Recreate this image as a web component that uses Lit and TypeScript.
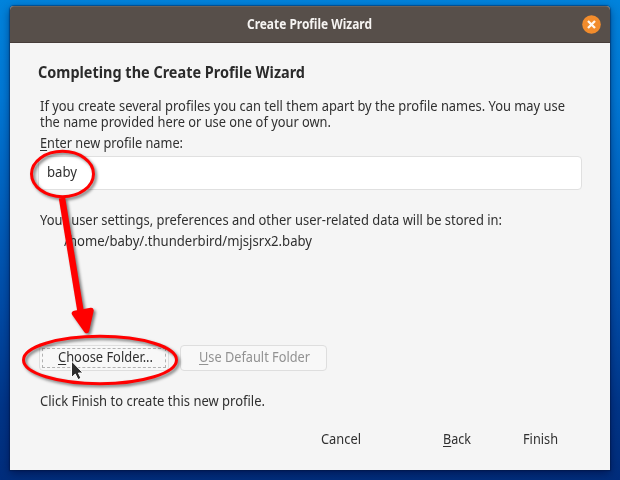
import { LitElement, html, css, svg } from "lit";
import { customElement, property } from "lit/decorators.js";

/** A single line of text condensed to a given width, with an optional access key. */
@customElement("text-line")
class TextLine extends LitElement {
  @property() text = "";
  @property({ type: Number }) width = 0;
  @property({ type: Boolean }) accesskeyed = false;
  static styles = css`
    :host { display: block; white-space: nowrap; line-height: 16px; height: 16px; }
    .run { display: block; width: max-content; transform-origin: 0 50%; }
    .key { text-decoration: underline; text-decoration-thickness: 1px; text-underline-offset: 2px; }
  `;
  firstUpdated() {
    const run = this.renderRoot.querySelector(".run") as HTMLElement;
    const natural = run.getBoundingClientRect().width;
    if (natural) run.style.transform = `scaleX(${this.width / natural})`;
    this.style.width = `${this.width}px`;
  }
  render() {
    return this.accesskeyed
      ? html`<span class="run"><span class="key">${this.text[0]}</span>${this.text.slice(1)}</span>`
      : html`<span class="run">${this.text}</span>`;
  }
}

@customElement("app-root")
class AppRoot extends LitElement {
  static styles = css`
    :host {
      display: block; position: relative; box-sizing: border-box;
      width: 620px; height: 480px; padding: 6px 10px 10px; overflow: hidden;
      background: linear-gradient(180deg, #0083dc 0%, #0078d6 20%, #0060bd 43%, #004aa5 65%, #003588 85%, #002d7c 100%);
      font-family: "Noto Sans", "Open Sans", sans-serif;
      font-size: 14px; font-stretch: 87.5%; color: #303030;
    }
    .dialog {
      display: flex; flex-direction: column; height: 464px; background: #f5f5f5;
      border-radius: 4px 4px 0 0; box-shadow: 0 0 1px 1px rgba(0,20,60,.4), 0 3px 10px rgba(0,0,40,.5);
    }
    .titlebar {
      display: grid; grid-template-columns: 1fr auto 1fr; align-items: center;
      height: 37px; flex: none; box-sizing: border-box; padding: 0 9px 1px 0;
      background: #574f4a; border-top: 1px solid #6a605a; border-bottom: 1px solid #463c39;
      border-radius: 4px 4px 0 0; color: #f6f4f2; font-weight: 700;
    }
    .titlebar text-line { grid-column: 2; margin-left: 8px; }
    .close { justify-self: end; display: block; }
    .body { display: flex; flex-direction: column; padding: 19px 28px 0 30px; }
    .heading { font-size: 16px; font-weight: 700; color: #2b2b2b; margin: 2px 0 18px -2px; }
    .label { margin-top: 5px; }
    .field {
      box-sizing: border-box; height: 34px; margin: 5px 0 22px -2px; padding: 7px 8px;
      background: #fff; border: 1px solid #e0e0e0; border-radius: 4px;
    }
    .path { margin: 5px 0 96px 24px; }
    .buttons { display: flex; gap: 11px; margin-left: -1px; }
    .button {
      display: flex; justify-content: center; box-sizing: border-box; width: 130px; height: 26px;
      padding: 3px; border: 1px solid #dedede; border-radius: 4px; background: #f8f8f8;
    }
    .focus { flex: 1; display: flex; justify-content: center; margin: -1px -1px; padding-left: 2px; border: 1px dashed #b2b2b2; }
    .button.disabled { width: 147px; color: #929292; padding-left: 5px; }
    .note { margin-top: 22px; }
    .actions { display: flex; margin: 22px 0 0 281px; }
    .back { margin-left: 82px; }
    .finish { margin-left: 52px; }
    .marks { position: absolute; left: 0; top: 0; pointer-events: none; }
    .red { filter: drop-shadow(2px 2px 1.5px rgba(0,0,0,.5)); }
  `;
  render() {
    return html`
      <div class="dialog">
        <div class="titlebar">
          <text-line text="Create Profile Wizard" width="125"></text-line>
          <svg class="close" width="19" height="19" viewBox="0 0 19 19">
            <circle cx="9.5" cy="9.5" r="9.3" fill="#f28c2c"/>
            <path d="M6 6L13 13M13 6L6 13" stroke="#fff8ef" stroke-width="2.3"/>
          </svg>
        </div>
        <div class="body">
          <text-line class="heading" text="Completing the Create Profile Wizard" width="267"></text-line>
          <text-line text="If you create several profiles you can tell them apart by the profile names. You may use" width="525"></text-line>
          <text-line text="the name provided here or use one of your own." width="291"></text-line>
          <text-line class="label" text="Enter new profile name:" width="143" accesskeyed></text-line>
          <div class="field"><text-line text="baby" width="30"></text-line></div>
          <text-line text="Your user settings, preferences and other user-related data will be stored in:" width="462"></text-line>
          <text-line class="path" text="/home/baby/.thunderbird/mjsjsrx2.baby" width="248"></text-line>
          <div class="buttons">
            <div class="button"><div class="focus"><text-line text="Choose Folder..." width="95" accesskeyed></text-line></div></div>
            <div class="button disabled"><text-line text="Use Default Folder" width="111" accesskeyed></text-line></div>
          </div>
          <text-line class="note" text="Click Finish to create this new profile." width="225"></text-line>
          <div class="actions">
            <text-line text="Cancel" width="40"></text-line>
            <text-line class="back" text="Back" width="28" accesskeyed></text-line>
            <text-line class="finish" text="Finish" width="35"></text-line>
          </div>
        </div>
      </div>
      <svg class="marks" width="620" height="480" viewBox="0 0 620 480">
        ${svg`
        <path d="M71.5 361V377.5L75.3 374L78 379.6L81 378.2L78.4 373H83Z" fill="#2d2d2d" stroke="#fff" stroke-width="1"/>
        <g class="red" fill="none" stroke="#ff0000" stroke-width="3">
          <ellipse cx="62.5" cy="174" rx="31" ry="22.7"/>
          <ellipse cx="100" cy="360" rx="76.5" ry="23.7"/>
          <path d="M62 198L81 314" stroke-width="6.5"/>
          <path d="M74.5 313.5L91 310.5L86.5 330.5Z" fill="#ff0000" stroke-width="5.5" stroke-linejoin="round"/>
        </g>`}
      </svg>`;
  }
}
